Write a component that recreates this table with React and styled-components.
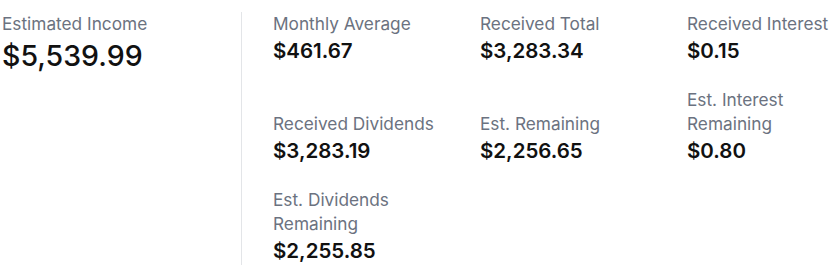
import React from "react";
import styled, { createGlobalStyle } from "styled-components";

const Global = createGlobalStyle`
  html, body { margin: 0; padding: 0; background: #ffffff; }
  body { font-family: Inter, "Noto Sans", sans-serif; -webkit-font-smoothing: antialiased; }
`;

const Wrapper = styled.div`
  display: flex;
  align-items: flex-start;
  padding: 12px 0 0 2px;
`;

const Summary = styled.div`
  flex: 0 0 239px;
  display: flex;
  flex-direction: column;
`;

const Details = styled.div`
  flex: 1 1 auto;
  min-width: 0;
  border-left: 1px solid #e3e5e8;
  padding-left: 31px;
  display: grid;
  grid-template-columns: 207px 207px 1fr;
  row-gap: 23px;
  align-items: end;
`;

const Stat = styled.div`
  display: flex;
  flex-direction: column;
  max-width: ${(p) => (p.$narrow ? "140px" : "none")};
`;

const Label = styled.div`
  font-size: 17.25px;
  line-height: 24.5px;
  color: #6b7280;
  font-weight: 400;
  white-space: ${(p) => (p.$nowrap ? "nowrap" : "normal")};
`;

const Value = styled.div`
  font-size: ${(p) => (p.$big ? "28.5px" : "20.5px")};
  line-height: ${(p) => (p.$big ? "38px" : "28px")};
  font-weight: ${(p) => (p.$big ? 500 : 600)};
  color: #111111;
`;

const stats = [
  { label: "Monthly Average", value: "$461.67" },
  { label: "Received Total", value: "$3,283.34" },
  { label: "Received Interest", value: "$0.15" },
  { label: "Received Dividends", value: "$3,283.19" },
  { label: "Est. Remaining", value: "$2,256.65" },
  { label: "Est. Interest Remaining", value: "$0.80", narrow: true },
  { label: "Est. Dividends Remaining", value: "$2,255.85", narrow: true },
];

export default function App() {
  return (
    <>
      <Global />
      <Wrapper>
        <Summary>
          <Label>Estimated Income</Label>
          <Value $big>$5,539.99</Value>
        </Summary>
        <Details>
          {stats.map((s) => (
            <Stat key={s.label} $narrow={s.narrow}>
              <Label $nowrap={!s.narrow}>{s.label}</Label>
              <Value>{s.value}</Value>
            </Stat>
          ))}
        </Details>
      </Wrapper>
    </>
  );
}
